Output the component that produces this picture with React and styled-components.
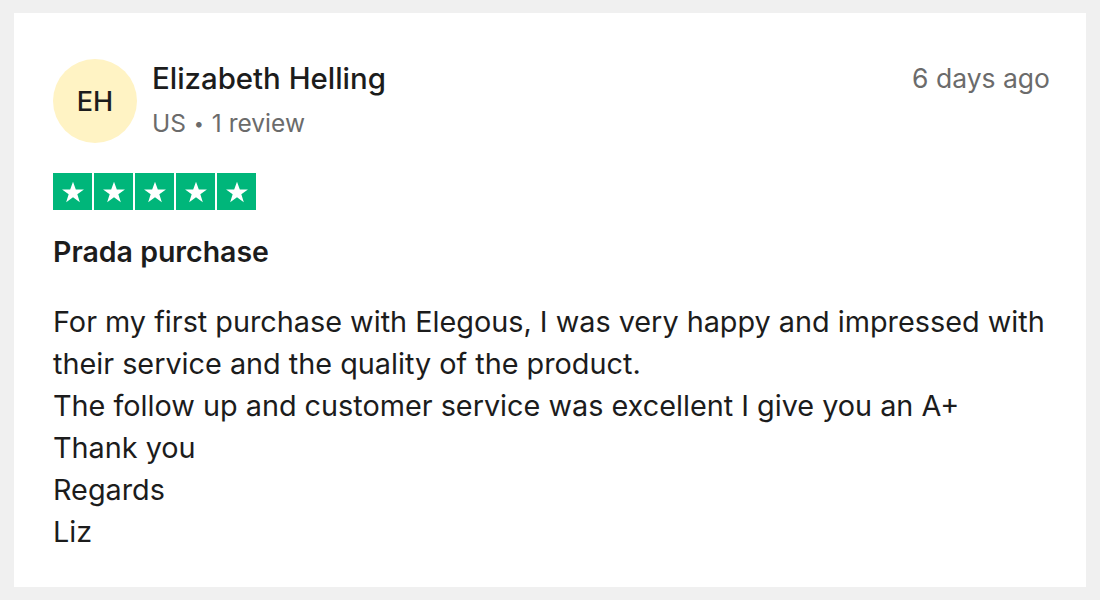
import React from 'react';
import styled, { createGlobalStyle } from 'styled-components';

const GlobalStyle = createGlobalStyle`
  html, body {
    margin: 0;
    padding: 0;
    background: #f0f0f0;
  }
  body {
    font-family: Inter, "Liberation Sans", Arial, sans-serif;
    color: #1c1c1c;
  }
`;

const Page = styled.div`
  padding: 13px 14px;
  height: 600px;
  box-sizing: border-box;
`;

const Card = styled.article`
  background: #ffffff;
  height: 574px;
  box-sizing: border-box;
  padding: 46px 36px 0 39px;
`;

const Header = styled.header`
  display: flex;
  align-items: flex-start;
`;

const Avatar = styled.div`
  width: 84px;
  height: 84px;
  border-radius: 50%;
  background: #fff3c4;
  display: flex;
  align-items: center;
  justify-content: center;
  font-size: 27px;
  font-weight: 500;
  color: #1c1c1c;
  flex-shrink: 0;
`;

const Person = styled.div`
  margin-left: 15px;
  flex: 1;
  padding-top: 2px;
`;

const Name = styled.div`
  font-size: 29.4px;
  font-weight: 500;
  line-height: 36px;
`;

const Meta = styled.div`
  font-size: 24.5px;
  color: #6b6b6b;
  line-height: 34px;
  margin-top: 9px;
`;

const Dot = styled.span`
  font-size: 18px;
  vertical-align: 2px;
  margin: 0 1px;
`;

const Date = styled.time`
  font-size: 26.5px;
  color: #6b6b6b;
  line-height: 36px;
  padding-top: 1px;
`;

const Stars = styled.div`
  display: flex;
  gap: 2px;
  margin-top: 30px;
`;

const StarBox = styled.div`
  width: 39px;
  height: 37px;
  background: #00b67a;
  display: flex;
  align-items: center;
  justify-content: center;
`;

const Title = styled.h2`
  margin: 24px 0 0;
  font-size: 28.5px;
  font-weight: 600;
  line-height: 36px;
`;

const Body = styled.p`
  margin: 31px 0 0;
  font-size: 28.8px;
  line-height: 42px;
  color: #1c1c1c;
`;

function Star() {
  return (
    <StarBox>
      <svg width="26" height="26" viewBox="0 0 24 24">
        <path
          d="M12 2.5l2.6 7.1h7.5l-6.1 4.5 2.3 7.3L12 16.9l-6.3 4.5 2.3-7.3-6.1-4.5h7.5z"
          fill="#ffffff"
        />
      </svg>
    </StarBox>
  );
}

export default function App() {
  return (
    <>
      <GlobalStyle />
      <Page>
        <Card>
          <Header>
            <Avatar>EH</Avatar>
            <Person>
              <Name>Elizabeth Helling</Name>
              <Meta>US <Dot>•</Dot> 1 review</Meta>
            </Person>
            <Date>6 days ago</Date>
          </Header>
          <Stars>
            {[0, 1, 2, 3, 4].map((i) => <Star key={i} />)}
          </Stars>
          <Title>Prada purchase</Title>
          <Body>
            For my first purchase with Elegous, I was very happy and impressed with
            <br />
            their service and the quality of the product.
            <br />
            The follow up and customer service was excellent I give you an A+
            <br />
            Thank you
            <br />
            Regards
            <br />
            Liz
          </Body>
        </Card>
      </Page>
    </>
  );
}
